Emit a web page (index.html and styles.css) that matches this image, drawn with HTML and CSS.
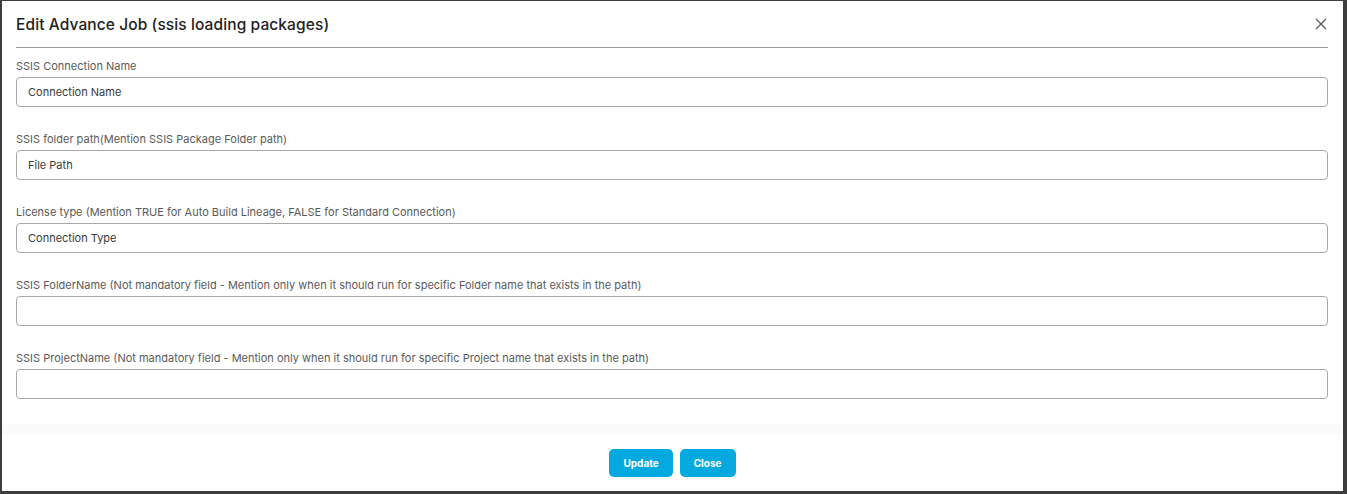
FILE: index.html
```html
<!DOCTYPE html>
<html lang="en">
<head>
<meta charset="utf-8">
<title>Edit Advance Job</title>
<link rel="stylesheet" href="styles.css">
</head>
<body>
<div class="modal">
  <div class="modal-header">
    <h1 class="modal-title">Edit Advance Job (ssis loading packages)</h1>
    <button class="close-x" aria-label="Close">
      <svg width="12" height="12" viewBox="0 0 12 12"><path d="M1 1 L11 11 M11 1 L1 11" stroke="#555" stroke-width="1.2" fill="none"/></svg>
    </button>
  </div>
  <div class="modal-body">
    <div class="field">
      <label class="field-label">SSIS Connection Name</label>
      <input class="field-input" type="text" placeholder="Connection Name">
    </div>
    <div class="field">
      <label class="field-label">SSIS folder path(Mention SSIS Package Folder path)</label>
      <input class="field-input" type="text" placeholder="File Path">
    </div>
    <div class="field">
      <label class="field-label">License type (Mention TRUE for Auto Build Lineage, FALSE for Standard Connection)</label>
      <input class="field-input" type="text" placeholder="Connection Type">
    </div>
    <div class="field">
      <label class="field-label">SSIS FolderName (Not mandatory field - Mention only when it should run for specific Folder name that exists in the path)</label>
      <input class="field-input" type="text">
    </div>
    <div class="field">
      <label class="field-label">SSIS ProjectName (Not mandatory field - Mention only when it should run for specific Project name that exists in the path)</label>
      <input class="field-input" type="text">
    </div>
  </div>
  <div class="modal-footer">
    <button class="btn">Update</button>
    <button class="btn">Close</button>
  </div>
</div>
</body>
</html>
```
FILE: styles.css
```css
html, body {
  margin: 0;
  padding: 0;
}
body {
  background: #3d3d3d;
  font-family: Inter, "Noto Sans", sans-serif;
  box-sizing: border-box;
  padding: 1px 4px 3px 2px;
  height: 494px;
}
.modal {
  background: #fff;
  height: 100%;
  display: flex;
  flex-direction: column;
}
.modal-header {
  display: flex;
  align-items: center;
  justify-content: space-between;
  margin: 0 15px 0 14px;
  height: 46px;
  border-bottom: 1px solid #9a9a9a;
}
.modal-title {
  margin: 0;
  font-size: 15.5px;
  font-weight: 500;
  color: #222;
  letter-spacing: 0.1px;
  padding-top: 1px;
}
.close-x {
  border: 0;
  background: none;
  padding: 0;
  margin-right: 1px;
  display: flex;
  cursor: pointer;
}
.modal-body {
  padding: 11px 15px 0 14px;
  display: flex;
  flex-direction: column;
  gap: 25px;
}
.field {
  display: flex;
  flex-direction: column;
  gap: 3px;
}
.field-label {
  font-size: 11px;
  color: #5a5a5a;
  line-height: 15px;
}
.field-input {
  box-sizing: border-box;
  height: 30px;
  border: 1px solid #a8a8a8;
  border-radius: 4px;
  padding: 0 11px;
  font-family: inherit;
  font-size: 11px;
  color: #333;
  outline: none;
}
.field-input::placeholder {
  color: #3a3a3a;
}
.modal-footer {
  margin-top: auto;
  border-top: 10px solid #fafafa;
  height: 67px;
  display: flex;
  justify-content: center;
  align-items: flex-start;
  gap: 7px;
  padding-top: 15px;
  box-sizing: border-box;
}
.btn {
  height: 28px;
  border: 0;
  border-radius: 5px;
  background: #04a9df;
  color: #fff;
  font-family: inherit;
  font-weight: 700;
  font-size: 10px;
  padding: 0 14px;
  cursor: pointer;
}
```
